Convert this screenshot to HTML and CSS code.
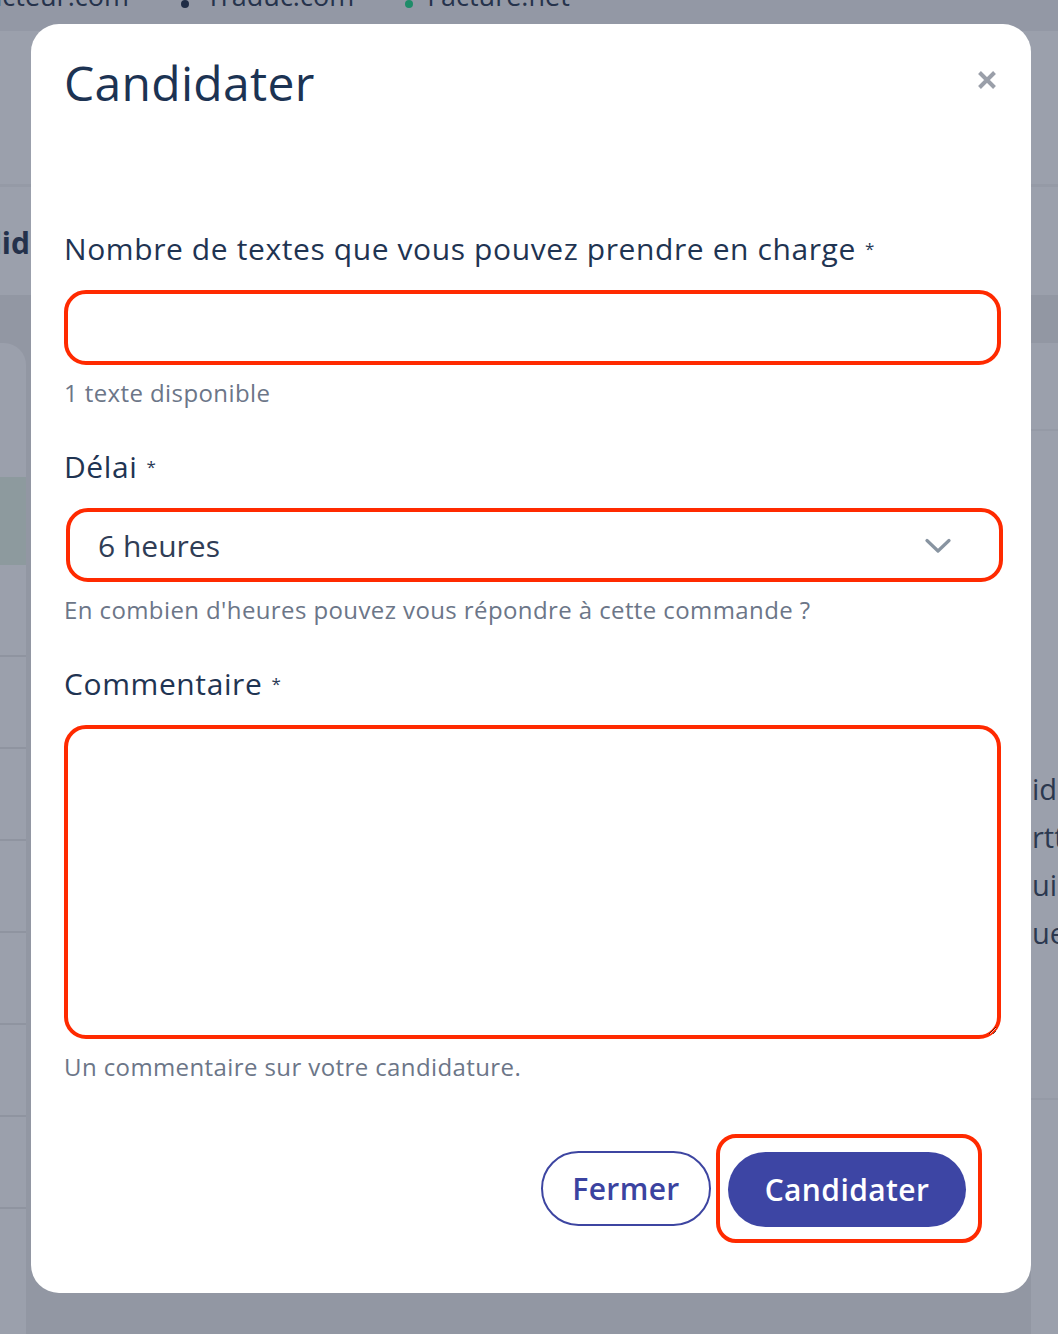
FILE: index.html
```html
<!DOCTYPE html>
<html lang="fr">
<head>
<meta charset="utf-8">
<title>Candidater</title>
<link rel="stylesheet" href="styles.css">
</head>
<body>
<div class="page">
  <div class="topbar">
    <span class="site first">Redacteur.com</span>
    <span class="dot navy"></span>
    <span class="site">Traduc.com</span>
    <span class="dot green"></span>
    <span class="site">Facture.net</span>
  </div>
  <div class="hero"></div>
  <div class="hero2">
    <div class="edge-left"><span class="edge-title">Candid</span></div>
  </div>
  <div class="content">
    <div class="card-left">
      <div class="cl-head"></div>
      <div class="cl-teal"></div>
      <div class="cl-row"></div>
      <div class="cl-row"></div>
      <div class="cl-row"></div>
      <div class="cl-row"></div>
      <div class="cl-row"></div>
      <div class="cl-row"></div>
      <div class="cl-row"></div>
    </div>
    <div class="gap-col"></div>
    <div class="card-right">
      <div class="cr-head"></div>
      <div class="cr-body">
        <p>id</p>
        <p>rtt</p>
        <p>ui</p>
        <p>ue</p>
      </div>
      <div class="cr-foot"></div>
    </div>
  </div>
</div>

<div class="modal">
  <div class="modal-head">
    <h1 class="title">Candidater</h1>
    <button class="close" aria-label="Fermer">
      <svg width="20" height="20" viewBox="0 0 20 20"><path d="M2.5 2.5 L17.5 17.5 M17.5 2.5 L2.5 17.5" stroke="#9a9fa9" stroke-width="4" stroke-linecap="butt" fill="none"/></svg>
    </button>
  </div>

  <div class="group">
    <label class="label">Nombre de textes que vous pouvez prendre en charge<span class="req">*</span></label>
    <input class="field input" type="text">
    <div class="hint">1 texte disponible</div>
  </div>

  <div class="group">
    <label class="label">Délai<span class="req">*</span></label>
    <div class="field select">
      <span class="select-value">6 heures</span>
      <svg class="chev" width="26" height="16" viewBox="0 0 26 16"><path d="M2 2.5 L13 13 L24 2.5" stroke="#8894a1" stroke-width="3.2" fill="none" stroke-linecap="round" stroke-linejoin="round"/></svg>
    </div>
    <div class="hint">En combien d'heures pouvez vous répondre à cette commande ?</div>
  </div>

  <div class="group group-last">
    <label class="label">Commentaire<span class="req">*</span></label>
    <textarea class="field textarea"></textarea>
    <div class="hint">Un commentaire sur votre candidature.</div>
  </div>

  <div class="actions">
    <button class="btn btn-outline">Fermer</button>
    <div class="highlight">
      <button class="btn btn-primary">Candidater</button>
    </div>
  </div>
</div>
</body>
</html>
```
FILE: styles.css
```css
* { box-sizing: border-box; }

html, body {
  margin: 0;
  height: 1334px;
  overflow: hidden;
}

body {
  font-family: "Open Sans", "Noto Sans", sans-serif;
  background: #9499a6;
}

/* ---------- background page (dimmed) ---------- */
.page {
  height: 1334px;
  display: flex;
  flex-direction: column;
}

.topbar {
  height: 31px;
  background: #9398a5;
  display: flex;
  align-items: flex-end;
  overflow: hidden;
  color: #26334c;
  font-size: 27px;
  line-height: 1;
  white-space: nowrap;
}

.site {
  margin-bottom: 22px;
}

.site.first { margin-left: -61px; }

.dot {
  width: 8px;
  height: 8px;
  border-radius: 50%;
  margin: 0 17px 23px 52px;
  flex: none;
}
.dot.navy { background: #1f2c45; }
.dot.green { background: #1f8c69; margin-left: 51px; margin-right: 14px; }

.hero {
  height: 156px;
  background: #9ba0ac;
  border-bottom: 3px solid #959aa6;
  flex: none;
}

.hero2 {
  height: 108px;
  background: #9ba0ac;
  flex: none;
  display: flex;
  align-items: center;
}

.edge-left {
  width: 30px;
  display: flex;
  justify-content: flex-end;
  overflow: hidden;
  white-space: nowrap;
}

.edge-title {
  font-size: 30px;
  font-weight: 700;
  color: #24314b;
  margin-top: 3px;
}

.content {
  flex: 1;
  background: #9297a3;
  padding-top: 48px;
  display: flex;
}

.card-left {
  width: 26px;
  background: #9ba0ac;
  border-top-right-radius: 22px;
  display: flex;
  flex-direction: column;
  flex: none;
}

.cl-head { height: 134px; }
.cl-teal { height: 88px; background: #8d9a9e; }
.cl-row {
  height: 92px;
  border-bottom: 2px solid #8f94a0;
}

.gap-col { flex: 1; }

.card-right {
  width: 27px;
  background: #9ba0ac;
  display: flex;
  flex-direction: column;
  overflow: hidden;
  flex: none;
}

.cr-head {
  height: 88px;
  border-bottom: 2px solid #959aa6;
}

.cr-body {
  padding-top: 334px;
  white-space: nowrap;
}

.cr-body p {
  margin: 0;
  font-size: 29px;
  line-height: 48px;
  color: #2b384f;
  padding-left: 1px;
}

.cr-foot {
  margin-top: 141px;
  border-top: 2px solid #959aa6;
}

/* ---------- modal ---------- */
.modal {
  position: fixed;
  left: 31px;
  top: 24px;
  width: 1000px;
  height: 1269px;
  background: #ffffff;
  border-radius: 28px;
  padding: 31px 30px 0 33px;
  display: flex;
  flex-direction: column;
}

.modal-head {
  display: flex;
  justify-content: space-between;
  align-items: flex-start;
  margin-bottom: 120px;
}

.title {
  margin: 0;
  font-size: 48px;
  font-weight: 400;
  line-height: 56px;
  color: #1c3353;
  letter-spacing: 0.3px;
}

.close {
  border: 0;
  background: none;
  padding: 0;
  margin: 15px 4px 0 0;
  width: 20px;
  height: 20px;
  display: flex;
}

.group {
  display: flex;
  flex-direction: column;
  margin-bottom: 41px;
}

.group-last { margin-bottom: 52px; }

.label {
  font-size: 30px;
  line-height: 36px;
  color: #1f3452;
  margin-bottom: 23px;
  display: flex;
  align-items: flex-start;
  letter-spacing: 0.6px;
}

.req {
  font-size: 17px;
  line-height: 1;
  margin-left: 9px;
  margin-top: 9px;
  color: #2a3a55;
  letter-spacing: 0;
}

.field {
  width: 100%;
  border: 4px solid #ff2a00;
  border-radius: 22px;
  background: #fff;
  font-family: inherit;
  outline: none;
}

.input { height: 75px; }

.select {
  height: 74px;
  padding: 0 48px 0 28px;
  display: flex;
  align-items: center;
  justify-content: space-between;
  margin-left: 2px;
  width: 937px;
}

.select-value {
  font-size: 30px;
  color: #2f3d56;
}

.chev { flex: none; margin-top: 2px; }

.textarea {
  height: 314px;
  resize: vertical;
  display: block;
}

.hint {
  margin-top: 13px;
  font-size: 24px;
  line-height: 30px;
  color: #6c7688;
  letter-spacing: 0.4px;
}

/* ---------- actions ---------- */
.actions {
  display: flex;
  justify-content: flex-end;
  align-items: center;
  gap: 5px;
  margin-right: 19px;
}

.btn {
  height: 75px;
  border-radius: 40px;
  font-family: inherit;
  font-size: 30px;
  font-weight: 600;
  cursor: pointer;
  letter-spacing: 0.4px;
}

.btn-outline {
  width: 170px;
  border: 2px solid #3d45a1;
  background: #fff;
  color: #3b43a0;
}

.highlight {
  border: 4px solid #ff2a00;
  border-radius: 20px;
  padding: 14px 12px 12px 8px;
}

.btn-primary {
  width: 238px;
  border: 0;
  background: #3d45a4;
  color: #ffffff;
  display: block;
}
```
